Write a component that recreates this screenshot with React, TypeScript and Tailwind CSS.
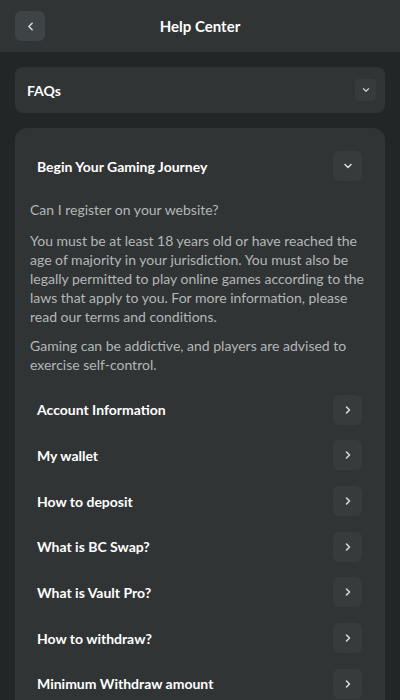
import { ChevronDown, ChevronLeft, ChevronRight } from "lucide-react";

const topics = [
  "Account Information",
  "My wallet",
  "How to deposit",
  "What is BC Swap?",
  "What is Vault Pro?",
  "How to withdraw?",
  "Minimum Withdraw amount",
];

const App = () => {
  return (
    <div
      className="w-[400px] h-[700px] overflow-hidden bg-[#232626] text-white"
      style={{ fontFamily: "Lato, 'Noto Sans', sans-serif" }}
    >
      {/* header */}
      <div className="h-[52px] bg-[#313435] grid grid-cols-[30px_1fr_30px] items-center px-[15px]">
        <button className="w-[30px] h-[30px] rounded-md bg-[#3e4345] flex items-center justify-center">
          <ChevronLeft size={13} strokeWidth={3} className="text-[#d6d8d9]" />
        </button>
        <div className="text-center text-[15px] font-bold">Help Center</div>
        <div />
      </div>

      <div className="px-[15px] pt-[15px]">
        {/* faqs dropdown */}
        <div className="h-[46px] rounded-lg bg-[#313435] flex items-center justify-between pl-3 pr-[9px]">
          <span className="text-[14px] font-bold">FAQs</span>
          <div className="w-[21px] h-[22px] rounded bg-[#373b3c] flex items-center justify-center">
            <ChevronDown size={10} strokeWidth={3} className="text-[#c9cccd]" />
          </div>
        </div>

        {/* faq card */}
        <div className="mt-[15px] rounded-t-xl bg-[#313435] pt-[23px] pb-6">
          <div className="flex items-center justify-between pl-[22px] pr-[23px]">
            <span className="text-[14px] font-bold">Begin Your Gaming Journey</span>
            <div className="w-[29px] h-[30px] rounded-md bg-[#373b3c] flex items-center justify-center">
              <ChevronDown size={12} strokeWidth={3.2} className="text-[#d6d8d9]" />
            </div>
          </div>

          <div className="px-[15px] text-[14px] leading-[19px] text-[#b4b7b8]">
            <p className="mt-[19px]">Can I register on your website?</p>
            <p className="mt-[12px]">
              You must be at least 18 years old or have reached the age of majority in your
              jurisdiction. You must also be legally permitted to play online games according
              to the laws that apply to you. For more information, please read our terms and
              conditions.
            </p>
            <p className="mt-[10px]">
              Gaming can be addictive, and players are advised to exercise self-control.
            </p>
          </div>

          <div className="mt-[13px]">
            {topics.map((t) => (
              <div key={t} className="h-[45.67px] flex items-center justify-between pl-[22px] pr-[23px]">
                <span className="text-[14px] font-bold">{t}</span>
                <div className="w-[29px] h-[30px] rounded-md bg-[#373b3c] flex items-center justify-center">
                  <ChevronRight size={12} strokeWidth={3.2} className="text-[#d6d8d9]" />
                </div>
              </div>
            ))}
          </div>
        </div>
      </div>
    </div>
  );
};

export default App;
